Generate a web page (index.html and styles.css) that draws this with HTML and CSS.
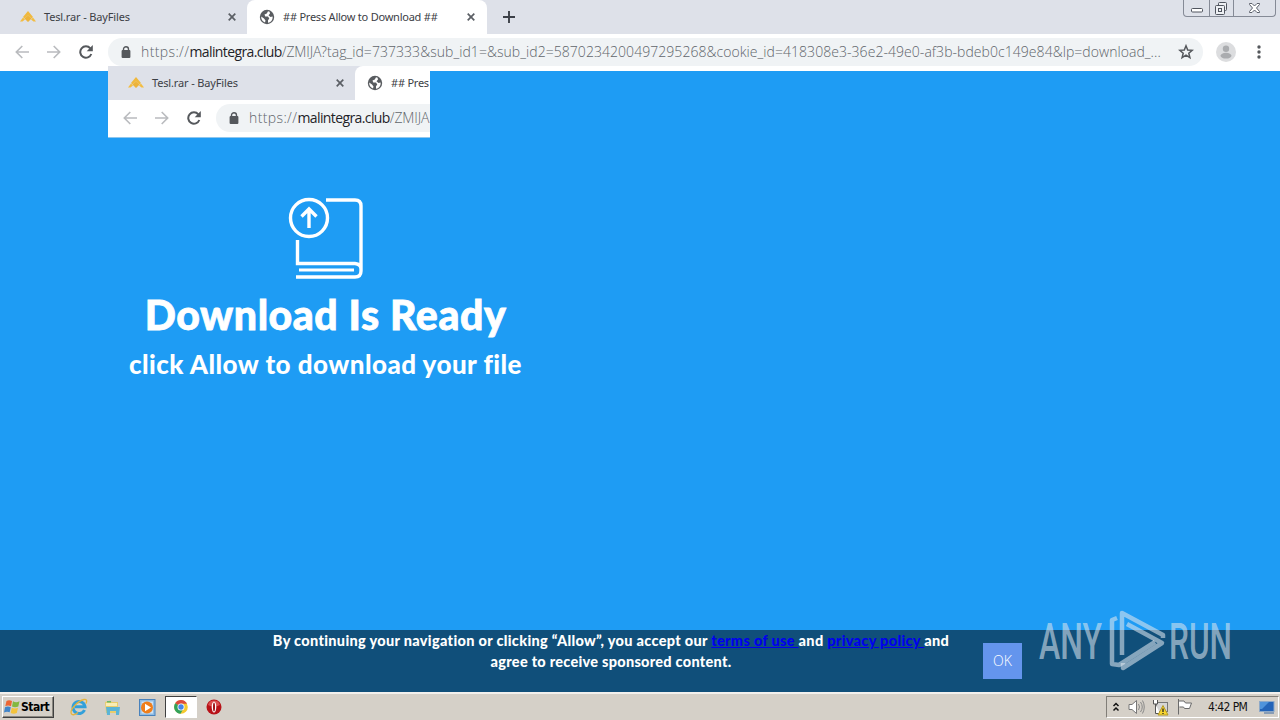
FILE: index.html
```html
<!DOCTYPE html>
<html lang="en">
<head>
<meta charset="utf-8">
<title>## Press Allow to Download ##</title>
<link rel="stylesheet" href="styles.css">
</head>
<body>
<svg width="0" height="0" class="defs">
  <symbol id="bay" viewBox="0 0 16 12"><path d="M8 0L13 6L11.500 7.500L8 4.500L4.500 7.500L3 6z" fill="#f0b93e"/><path d="M8 5.500L10.500 8L8 10.500L5.500 8zM3 6.500L5 8.500L2.500 10.500H0zM13 6.500L11 8.500L13.500 10.500H16z" fill="#f3bd42"/><path d="M4.500 7.500L8 4.500L11.500 7.500L8 11z" fill="#edb33a"/></symbol>
  <symbol id="close" viewBox="0 0 8 8"><path d="M.7.7L7.300 7.300M7.300.7L.7 7.300" stroke="#5b5f65" stroke-width="1.700" fill="none"/></symbol>
  <symbol id="globe" viewBox="0 0 16 16"><circle cx="8" cy="8" r="7.200" fill="#595c60"/><path d="M9 2.200L7.800 4.500L5.500 5.500L6.200 7.500H9L10.300 9.500L9 11.200V13.800C12.500 13.200 14 10.500 13.600 7.600L11.500 8L9.500 6.200L11 4.500L10.600 2.700zM2.200 7.500L5 9.500L6.500 11.500L6 13.500C3.500 12.600 2 10.300 2.200 7.500z" fill="#fff"/></symbol>
  <symbol id="back" viewBox="0 0 14 14"><path d="M14 7H1.500M7.300 1L1.300 7L7.300 13" stroke="#b9bbbe" stroke-width="1.600" fill="none"/></symbol>
  <symbol id="fwd" viewBox="0 0 14 14"><path d="M0 7H12.500M6.700 1L12.700 7L6.700 13" stroke="#b9bbbe" stroke-width="1.600" fill="none"/></symbol>
  <symbol id="reload" viewBox="0 0 14 14"><path d="M12.300 9A5.700 5.700 0 1 1 11.300 3.300" stroke="#55585c" stroke-width="2" fill="none"/><path d="M13.800 0V6.200H7.700z" fill="#55585c"/></symbol>
  <symbol id="lock" viewBox="0 0 10 12"><rect x=".6" y="4" width="8.800" height="8" rx="1" fill="#55585c"/><path d="M2.500 5V3.200A2.500 2.500 0 0 1 7.500 3.200V5" stroke="#55585c" stroke-width="1.400" fill="none"/></symbol>
</svg>
<div class="screen">
  <header class="chrome">
    <div class="tabs">
      <div class="tab"><svg class="bay"><use href="#bay"/></svg><span class="title t1">Tesl.rar - BayFiles</span><svg class="x"><use href="#close"/></svg></div>
      <div class="tab active"><svg class="globe"><use href="#globe"/></svg><span class="title t2">## Press Allow to Download ##</span><svg class="x"><use href="#close"/></svg></div>
      <svg class="plus" viewBox="0 0 12 12"><path d="M6 0V12M0 6H12" stroke="#3c4048" stroke-width="1.900"/></svg>
      <div class="winbtns">
        <span><svg width="14" height="6" viewBox="0 0 14 6"><rect x="1.500" y="1.500" width="11" height="3.500" rx="1" fill="#fff" stroke="#50555f"/></svg></span>
        <span class="mid"><svg width="15" height="15" viewBox="0 0 15 15" fill="#eef0f4" stroke="#50555f"><rect x="4.500" y="1.500" width="8" height="8" rx="1"/><rect x="1.500" y="4.500" width="9" height="9" rx="1"/><rect x="4.500" y="7.500" width="3" height="3"/></svg></span>
        <span class="last"><svg width="13" height="12" viewBox="0 0 13 12"><path d="M1.500 1.500H4L6.500 4L9 1.500H11.500V2.500L8.500 6L11.500 9.500V10.500H9L6.500 8L4 10.500H1.500V9.500L4.500 6L1.500 2.500z" fill="#fff" stroke="#5c616c"/></svg></span>
      </div>
    </div>
    <div class="toolbar">
      <svg class="nav"><use href="#back"/></svg><svg class="nav"><use href="#fwd"/></svg><svg class="nav"><use href="#reload"/></svg>
      <div class="omni"><svg class="lock"><use href="#lock"/></svg><span class="url u1"><i>https://</i><b>malintegra.club</b>/ZMIJA</span><span class="url u2">?tag_id=737333&amp;sub_id1=&amp;sub_id2=5870234200497295268&amp;cookie_id=418308e3-36e2-49e0-af3b-bdeb0c149e84&amp;lp=download_...</span>
        <svg class="star" viewBox="0 0 16 16"><path d="M8 1.800L9.700 6L14.200 6.300L10.800 9.200L11.900 13.600L8 11.200L4.100 13.600L5.200 9.200L1.800 6.300L6.300 6z" fill="none" stroke="#55585c" stroke-width="1.500"/></svg></div>
      <svg class="avatar" viewBox="0 0 20 20"><circle cx="10" cy="10" r="10" fill="#dcdddf"/><circle cx="10" cy="6.700" r="3.200" fill="#aaacaf"/><ellipse cx="10" cy="13.700" rx="5.500" ry="2.900" fill="#aaacaf"/></svg>
      <svg class="dots" viewBox="0 0 4 14" fill="#55585c"><circle cx="2" cy="2" r="1.700"/><circle cx="2" cy="7" r="1.700"/><circle cx="2" cy="12" r="1.700"/></svg>
    </div>
  </header>
  <main class="page">
    <section class="hero">
      <svg class="book" width="76" height="84" viewBox="0 0 76 84" fill="none" stroke="#fff" stroke-width="3.400"><circle cx="21" cy="21" r="18.500"/><path d="M21 31V12M13.500 19.500L21 12L28.500 19.500M38 3H67Q73 3 73 9V74Q73 80 67 80H8M9.500 43V66.500H67Q73 67 73 72"/><path d="M11 73H66" stroke-width="2.800"/></svg>
      <h1>Download Is Ready</h1>
      <h2>click Allow to download your file</h2>
    </section>
    <footer class="consent">
      <p><span class="l1">By continuing your navigation or clicking “Allow”, you accept our <a>terms of use </a>and <a>privacy policy </a>and</span><span class="l2">agree to receive sponsored content.</span></p>
      <button>OK</button>
    </footer>
  </main>
  <footer class="taskbar">
    <div class="start"><svg width="17" height="16" viewBox="0 0 17 16"><path d="M2.500 2Q5 .3 8 2L7 7.200Q4 5.800 1.300 7.200z" fill="#ed6533"/><path d="M9 2.300Q12 4 15.500 2.300L14.300 7.500Q11 9 8 7.500z" fill="#83b83e"/><path d="M1 8.200Q4 7 6.800 8.300L5.700 13.300Q3 12 0 13.500z" fill="#4285c9"/><path d="M7.800 8.700Q11 10.200 14 8.700L12.800 14Q9.500 15.500 6.700 13.900z" fill="#f4c33b"/></svg><span>Start</span></div>
    <svg class="ie" width="18" height="18" viewBox="0 0 18 18" fill="none"><path d="M14.500 12A6 6 0 1 1 15 8.800H5" stroke="#32a0da" stroke-width="3"/><path d="M1.500 16C-1 12 8 3 14 1.500Q18 1 16 5.500M1.500 16Q4 18 8 14.500" stroke="#e5b43d" stroke-width="1.300"/></svg>
    <svg class="folder" width="17" height="17" viewBox="0 0 17 17"><path d="M1 3L6 1.500L8 3H14V14L2 14z" fill="#e9cd6b"/><path d="M2 4H13V7H2z" fill="#f9edb5"/><path d="M3 2H7V3.500H3z" fill="#68b96c"/><path d="M2 8H16L15 16H12V12H6V16H3z" fill="#5bb4d6"/></svg>
    <svg class="wmp" width="17" height="17" viewBox="0 0 17 17"><rect x=".5" y=".5" width="15.500" height="16" fill="#8fbce4" stroke="#4982bc"/><rect x="2.500" y="2.500" width="11.500" height="12" fill="#cfe2f3"/><circle cx="8" cy="8.500" r="6" fill="#ef7e1b"/><path d="M6 4.800L12 8.500L6 12.200z" fill="#fff"/></svg>
    <div class="running"><svg width="14" height="14" viewBox="0 0 14 14"><circle cx="7" cy="7" r="6.800" fill="#f5c92f"/><path d="M7 7L1.200 3.300A6.800 6.800 0 0 1 13 3.800H7z" fill="#dd4a3d"/><path d="M7 7L1.200 3.300A6.800 6.800 0 0 0 6.500 13.800L9.500 8.500z" fill="#32a25b"/><circle cx="7" cy="7" r="3.500" fill="#fff"/><circle cx="7" cy="7" r="2.700" fill="#4685e8"/></svg></div>
    <svg class="opera" width="16" height="16" viewBox="0 0 16 16"><circle cx="8" cy="8" r="7.500" fill="#b81218"/><path d="M2 6A6.300 6.300 0 0 1 14 6Q8 9 2 6" fill="#dc5050"/><ellipse cx="8" cy="8" rx="2.300" ry="5.500" fill="#fff"/><ellipse cx="8" cy="8" rx="1" ry="4.600" fill="#9f1015"/></svg>
    <div class="tray">
      <svg width="8" height="11" viewBox="0 0 8 11"><path d="M1.500 4L4 1.500L6.500 4M1.500 8.500L4 6L6.500 8.500" fill="none" stroke="#111" stroke-width="1.500"/></svg>
      <svg class="sound" width="17" height="16" viewBox="0 0 17 16"><path d="M1 5.500H4L8.500 1.500V14.500L4 10.500H1z" fill="#fff" stroke="#777"/><path d="M10.500 5Q12.500 8 10.500 11M12.500 3Q16 8 12.500 13M14.500 1.500Q18 8 14.500 14.500" fill="none" stroke="#888"/></svg>
      <svg class="net" width="17" height="17" viewBox="0 0 17 17"><rect x="4.500" y="3.500" width="11" height="9" fill="#d6d6d6" stroke="#777"/><path d="M1.500 1V5H5.500V1M3.500 5V14.500H8" fill="#fff" stroke="#555"/><path d="M11 6.500L16 16H6z" fill="#f8d52f" stroke="#b39927"/><path d="M11 9.500V13M11 14V15" stroke="#222" stroke-width="1.300"/></svg>
      <svg class="flag" width="17" height="16" viewBox="0 0 17 16"><path d="M2.500 0V15.500M2.500 2H8L9.500 4H15.500L13.500 9.500H8.500L7.500 8H3.500" fill="#fff" stroke="#6b6b6b"/></svg>
      <span>4:42 PM</span>
      <svg class="desk" width="16" height="13" viewBox="0 0 16 13"><rect x=".5" y=".5" width="14.500" height="10" fill="#2464b8" stroke="#8ea9c8"/><path d="M1 1H10L3 8H1z" fill="#4f93db"/><path d="M5 12H15" stroke="#6f8daf" stroke-width="1.500"/></svg>
    </div>
  </footer>
  <div class="inset">
    <div class="tabs">
      <div class="tab"><svg class="bay"><use href="#bay"/></svg><span class="title t1">Tesl.rar - BayFiles</span><svg class="x"><use href="#close"/></svg></div>
      <div class="tab active"><svg class="globe"><use href="#globe"/></svg><span class="title t2">## Pres</span></div>
    </div>
    <div class="toolbar">
      <svg class="nav"><use href="#back"/></svg><svg class="nav"><use href="#fwd"/></svg><svg class="nav"><use href="#reload"/></svg>
      <div class="omni"><svg class="lock"><use href="#lock"/></svg><span class="url u1"><i>https://</i><b>malintegra.club</b>/ZMIJA</span></div>
    </div>
  </div>
  <svg class="mark" width="200" height="70" viewBox="0 0 200 70">
    <g fill="#dce6ee" fill-opacity=".58" font-family="Roboto, sans-serif" font-size="50" font-weight="500"><text transform="translate(3 53) scale(.67 1)" textLength="94" lengthAdjust="spacingAndGlyphs">ANY</text><text transform="translate(133 53) scale(.67 1)" textLength="94" lengthAdjust="spacingAndGlyphs">RUN</text></g>
    <g fill="none" stroke="#dce6ee" stroke-opacity=".58" stroke-width="4.500" stroke-linejoin="round"><path d="M86 49V7L127 29V32"/><path d="M81 12L76 14V58L83 59L119 36"/><path d="M91 18L126 37L87 62V57"/></g>
  </svg>
</div>
</body>
</html>
```
FILE: styles.css
```css
* { box-sizing: border-box; }
body { margin: 0; overflow: hidden; }
svg { display: block; flex: none; }
.defs { position: absolute; }
.screen { position: relative; width: 1280px; height: 720px; display: flex; flex-direction: column; overflow: hidden; font-family: "DejaVu Sans Condensed", "Noto Sans", sans-serif; }
.chrome { height: 71px; flex: none; background: #fff; }
.tabs { display: flex; height: 34px; background: #dee1e9; }
.tab { display: flex; align-items: center; flex: none; width: 247px; height: 34px; padding-left: 20px; }
.tab.active { width: 240px; padding-left: 12px; background: #fff; border-radius: 8px 8px 0 0; }
.bay { width: 16px; height: 12px; margin-right: 8px; }
.globe { width: 16px; height: 16px; margin-right: 8px; }
.x { width: 8px; height: 8px; }
.title { flex: none; white-space: nowrap; font: 11px/18px "Noto Sans", sans-serif; color: #3c4045; }
.t1 { width: 184px; letter-spacing: -.15px; }
.t2 { width: 184px; letter-spacing: -.23px; }
.plus { width: 12px; height: 12px; margin: 11px 0 0 16px; }
.winbtns { display: flex; width: 93px; height: 17px; margin-left: auto; margin-right: 4px; border: 1px solid #858a96; border-top: 0; border-radius: 0 0 4px 4px; }
.winbtns span { display: flex; flex: none; width: 25px; align-items: center; justify-content: center; padding-top: 3px; }
.winbtns .mid { border: 0 solid #858a96; border-width: 0 1px; padding: 0; }
.winbtns .last { width: 41px; padding: 0; }
.toolbar { display: flex; align-items: center; height: 37px; padding: 0 0 1px 15px; background: #fff; }
.nav { width: 14px; height: 14px; margin-right: 18px; }
.omni { display: flex; align-items: center; flex: none; width: 1095px; height: 28px; margin-left: -3px; padding-left: 13px; background: #f0f3f5; border-radius: 14px; }
.lock { width: 10px; height: 12px; margin-right: 10px; }
.url { flex: none; white-space: nowrap; font: 300 14px/20px "Open Sans", sans-serif; color: #60656b; }
.url i { font-style: normal; letter-spacing: .38px; }
.url b { font-weight: 400; color: #1f2328; letter-spacing: -.6px; }
.u1 { width: 180px; letter-spacing: -.15px; }
.u2 { width: 857px; letter-spacing: .05px; }
.star { width: 16px; height: 16px; }
.avatar { width: 20px; height: 20px; margin-left: 13px; }
.dots { width: 4px; height: 14px; margin-left: 21px; }
.page { display: flex; flex-direction: column; justify-content: space-between; flex: none; height: 621px; background: #1e9cf4; }
.hero { display: flex; flex-direction: column; align-items: center; width: 651px; padding-top: 126px; color: #fff; white-space: nowrap; }
.hero h1 { margin: 9px 0 0; font: 900 41px/50px Lato, sans-serif; letter-spacing: .55px; -webkit-text-stroke: .8px #fff; }
.hero h2 { margin: 9px 0 0; font: 900 26px/30px Lato, sans-serif; letter-spacing: .46px; }
.consent { display: flex; height: 62px; background: #104f7a; color: #fff; }
.consent p { display: flex; flex-direction: column; align-items: center; width: 676px; margin: 0 0 0 273px; font: 900 14.5px/21px Lato, sans-serif; white-space: nowrap; }
.l1 { letter-spacing: .32px; }
.l2 { letter-spacing: .27px; }
.consent a { color: #00e; text-decoration: underline; }
.consent button { width: 39px; height: 36px; margin: 13px 0 0 34px; padding: 0; border: 0; background: #6495ed; color: #fff; font: 300 14px/36px "Open Sans", sans-serif; }
.taskbar { display: flex; align-items: center; flex: none; height: 28px; background: #d5d0c8; border-top: 2px solid #f2f0ed; padding: 0 0 0 2px; }
.start { display: flex; align-items: center; width: 52px; height: 22px; padding-left: 1px; border: 1px solid; border-color: #fff #404040 #404040 #fff; box-shadow: inset -1px -1px #8a8780; font: bold 12px/18px "DejaVu Sans Condensed", sans-serif; color: #000; }
.start span { letter-spacing: -.5px; }
.ie { margin-left: 16px; }
.folder { margin-left: 16px; }
.wmp { margin-left: 18px; }
.running { display: flex; align-items: center; justify-content: center; width: 32px; height: 22px; margin-left: 9px; background: #fff; border: 1px solid; border-color: #404040 #fff #fff #404040; }
.opera { margin-left: 9px; }
.tray { display: flex; align-items: center; width: 173px; height: 22px; margin: 0 1px 0 auto; padding-left: 5px; border: 1px solid; border-color: #817e78 #fff #fff #817e78; font: 12px/18px "DejaVu Sans Condensed", sans-serif; color: #111; }
.sound { margin-left: 8px; }
.net { margin-left: 7px; }
.flag { margin-left: 7px; }
.tray span { width: 51px; margin-left: 15px; white-space: nowrap; letter-spacing: -.6px; }
.inset { position: absolute; left: 108px; top: 66px; width: 322px; height: 72px; overflow: hidden; background: #fff; border-bottom: 1px solid #8ec6ee; }
.mark { position: absolute; left: 1036px; top: 606px; }
```
